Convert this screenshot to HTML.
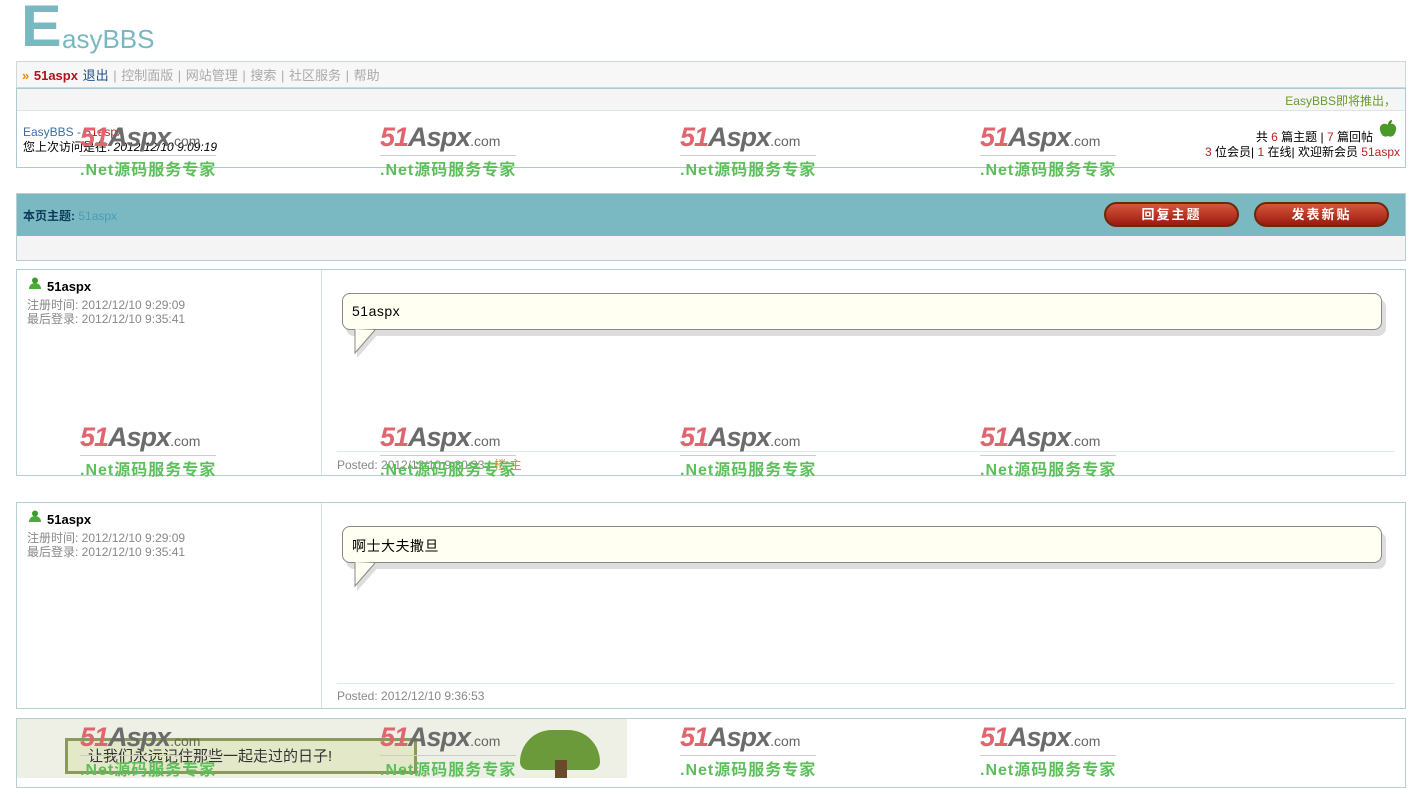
<!DOCTYPE html>
<html><head><meta charset="utf-8">
<style>
body{margin:0;width:1416px;height:778px;overflow:hidden;background:#fff;font-family:"Liberation Sans","Noto Sans CJK SC",sans-serif;font-size:12px;position:relative;}
.abs{position:absolute;}
.box{position:absolute;border:1px solid #b5d0d6;box-sizing:border-box;}
.wm{position:absolute;width:140px;height:55px;}
.wm .a{position:absolute;left:0;top:0;font:italic bold 27px "Liberation Sans",sans-serif;letter-spacing:-1px;color:#e0656f;}
.wm .a b{color:#6b6b6b;}
.wm .a small{font-size:14px;font-style:normal;font-weight:normal;color:#666;letter-spacing:0}
.wm .l{position:absolute;left:0;top:33px;width:136px;border-top:1px solid #ccc;}
.wm .n{position:absolute;left:0;top:34px;font:bold 16px "Liberation Sans","Noto Sans CJK SC",sans-serif;color:#5cbf5a;letter-spacing:1px;white-space:nowrap;}
.bub{position:absolute;left:342px;width:1040px;height:37px;background:#fffff2;border:1px solid #888;border-radius:8px;box-sizing:border-box;box-shadow:4px 6px 0 #ddd;font-size:14px;padding:9px 9px;font-family:"Liberation Sans","Noto Sans CJK SC",sans-serif;letter-spacing:.5px}
.tail{position:absolute;left:353px;}
.g{color:#888}
.red{color:#b22}
</style></head><body>
<div class="abs" style="left:21px;top:-2px;font:bold 58px 'Liberation Sans',sans-serif;color:#79b8c1;line-height:58px;transform:scaleX(1.05);transform-origin:left">E</div>
<div class="abs" style="left:62px;top:24px;font:26px 'Liberation Sans',sans-serif;color:#79b8c1;">asyBBS</div>

<div class="box" style="left:16px;top:61px;width:1390px;height:27px;background:#f7f7f7;border-color:#cfd8d8"></div>
<div class="abs" style="left:22px;top:65px;font-size:13px;color:#aaa;white-space:nowrap;word-spacing:1px"><span style="color:#e88a10;font-weight:bold">»</span> <b style="color:#b0131a">51aspx</b> <span style="color:#23508a">退出</span> | 控制面版 | 网站管理 | 搜索 | 社区服务 | 帮助</div>

<div class="box" style="left:16px;top:88px;width:1390px;height:80px;border-color:#a9cbd3"></div>
<div class="abs" style="left:17px;top:89px;width:1388px;height:21px;background:#f4f5f4;border-bottom:1px solid #dde5e5"></div>
<div class="abs" style="right:20px;top:92px;color:#6b9a2a;">EasyBBS即将推出，</div>
<div class="abs" style="left:23px;top:125px;color:#3a6ea5">EasyBBS - <span class="red">51aspx</span></div>
<div class="abs" style="left:23px;top:138px;color:#000">您上次访问是在: <i>2012/12/10 9:09:19</i></div>
<div class="abs" style="right:43px;top:128px;color:#000;">共 <span class="red">6</span> 篇主题 | <span class="red">7</span> 篇回帖</div>
<svg class="abs" style="left:1378px;top:119px" width="20" height="20" viewBox="0 0 20 20"><path d="M10 6C6 3 1 6 2 11c1 5 4 8 8 6 4 2 7-1 8-6 1-5-4-8-8-5z" fill="#4a9a2a"/><path d="M10 6c0-3 2-5 4-5 0 3-2 5-4 5z" fill="#3a8a1a"/></svg>
<div class="abs" style="right:16px;top:143px;color:#000;"><span class="red">3</span> 位会员| <span class="red">1</span> 在线| 欢迎新会员 <span class="red">51aspx</span></div>

<div class="box" style="left:16px;top:193px;width:1390px;height:68px;border-color:#b9cdd2"></div>
<div class="abs" style="left:17px;top:194px;width:1388px;height:42px;background:#7ab9c2"></div>
<div class="abs" style="left:17px;top:236px;width:1388px;height:24px;background:#f4f4f4"></div>
<div class="abs" style="left:23px;top:207px;color:#0d3a5a;font-weight:bold">本页主题: <span style="color:#4d9bb0;font-weight:normal">51aspx</span></div>
<div class="abs" style="left:1104px;top:202px;width:135px;height:25px;border-radius:13px;background:linear-gradient(#d8563c,#9a1a10);border:2px solid #6a2a08;box-sizing:border-box;text-align:center;color:#fff;font-weight:bold;font-size:13px;line-height:21px;letter-spacing:2px">回复主题</div>
<div class="abs" style="left:1254px;top:202px;width:135px;height:25px;border-radius:13px;background:linear-gradient(#d8563c,#9a1a10);border:2px solid #6a2a08;box-sizing:border-box;text-align:center;color:#fff;font-weight:bold;font-size:13px;line-height:21px;letter-spacing:2px">发表新贴</div>

<!-- post 1 -->
<div class="box" style="left:16px;top:269px;width:1390px;height:207px;border-color:#b5cfd5"></div>
<div class="abs" style="left:321px;top:270px;width:1px;height:205px;background:#d5e2e5"></div>
<div class="abs" style="left:337px;top:451px;width:1057px;height:1px;background:#dfe8e8"></div>
<svg class="abs" style="left:29px;top:277px" width="12" height="12"><circle cx="6" cy="3.5" r="3" fill="#3a9a2a"/><path d="M0 12c0-4 3-6 6-6s6 2 6 6z" fill="#4aaa3a"/></svg>
<div class="abs" style="left:47px;top:279px;font-weight:bold;font-size:13px">51aspx</div>
<div class="abs g" style="left:27px;top:298px;line-height:14px">注册时间: 2012/12/10 9:29:09<br>最后登录: 2012/12/10 9:35:41</div>
<div class="bub" style="top:293px">51aspx</div>
<svg class="tail" style="top:329px" width="30" height="36"><path d="M3 0 L3 26 L26 0Z" fill="#ddd" transform="translate(1,3)"/><path d="M2 0 L2 24 L22 1" fill="#fffff2" stroke="#888"/></svg>
<div class="abs g" style="left:337px;top:456px">Posted: 2012/12/10 9:30:33 | <span style="color:#d08a10">楼 主</span></div>

<!-- post 2 -->
<div class="box" style="left:16px;top:502px;width:1390px;height:207px;border-color:#b5cfd5"></div>
<div class="abs" style="left:321px;top:503px;width:1px;height:205px;background:#d5e2e5"></div>
<div class="abs" style="left:337px;top:683px;width:1057px;height:1px;background:#dfe8e8"></div>
<svg class="abs" style="left:29px;top:510px" width="12" height="12"><circle cx="6" cy="3.5" r="3" fill="#3a9a2a"/><path d="M0 12c0-4 3-6 6-6s6 2 6 6z" fill="#4aaa3a"/></svg>
<div class="abs" style="left:47px;top:512px;font-weight:bold;font-size:13px">51aspx</div>
<div class="abs g" style="left:27px;top:531px;line-height:14px">注册时间: 2012/12/10 9:29:09<br>最后登录: 2012/12/10 9:35:41</div>
<div class="bub" style="top:526px">啊士大夫撒旦</div>
<svg class="tail" style="top:562px" width="30" height="36"><path d="M3 0 L3 26 L26 0Z" fill="#ddd" transform="translate(1,3)"/><path d="M2 0 L2 24 L22 1" fill="#fffff2" stroke="#888"/></svg>
<div class="abs g" style="left:337px;top:689px">Posted: 2012/12/10 9:36:53</div>

<!-- banner -->
<div class="box" style="left:16px;top:718px;width:1390px;height:70px;border-color:#b5cfd5"></div>
<div class="abs" style="left:17px;top:719px;width:610px;height:59px;background:#eef0e6"></div>
<div class="abs" style="left:65px;top:738px;width:352px;height:36px;background:#e2e8c8;border:3px solid #8a9a5a;box-sizing:border-box;font-size:15px;color:#333;padding:4px 20px;white-space:nowrap">让我们永远记住那些一起走过的日子!</div>
<div class="abs" style="left:520px;top:730px;width:80px;height:40px;border-radius:40px 40px 10px 10px;background:#6a9a3a"></div>
<div class="abs" style="left:555px;top:760px;width:12px;height:18px;background:#6a4a2a"></div>

<!-- watermarks -->
<div class="wm" style="left:80px;top:122px"><div class="a">51<b>Aspx</b><small>.com</small></div><div class="l"></div><div class="n">.Net源码服务专家</div></div>
<div class="wm" style="left:380px;top:122px"><div class="a">51<b>Aspx</b><small>.com</small></div><div class="l"></div><div class="n">.Net源码服务专家</div></div>
<div class="wm" style="left:680px;top:122px"><div class="a">51<b>Aspx</b><small>.com</small></div><div class="l"></div><div class="n">.Net源码服务专家</div></div>
<div class="wm" style="left:980px;top:122px"><div class="a">51<b>Aspx</b><small>.com</small></div><div class="l"></div><div class="n">.Net源码服务专家</div></div>
<div class="wm" style="left:80px;top:422px"><div class="a">51<b>Aspx</b><small>.com</small></div><div class="l"></div><div class="n">.Net源码服务专家</div></div>
<div class="wm" style="left:380px;top:422px"><div class="a">51<b>Aspx</b><small>.com</small></div><div class="l"></div><div class="n">.Net源码服务专家</div></div>
<div class="wm" style="left:680px;top:422px"><div class="a">51<b>Aspx</b><small>.com</small></div><div class="l"></div><div class="n">.Net源码服务专家</div></div>
<div class="wm" style="left:980px;top:422px"><div class="a">51<b>Aspx</b><small>.com</small></div><div class="l"></div><div class="n">.Net源码服务专家</div></div>
<div class="wm" style="left:80px;top:722px"><div class="a">51<b>Aspx</b><small>.com</small></div><div class="l"></div><div class="n">.Net源码服务专家</div></div>
<div class="wm" style="left:380px;top:722px"><div class="a">51<b>Aspx</b><small>.com</small></div><div class="l"></div><div class="n">.Net源码服务专家</div></div>
<div class="wm" style="left:680px;top:722px"><div class="a">51<b>Aspx</b><small>.com</small></div><div class="l"></div><div class="n">.Net源码服务专家</div></div>
<div class="wm" style="left:980px;top:722px"><div class="a">51<b>Aspx</b><small>.com</small></div><div class="l"></div><div class="n">.Net源码服务专家</div></div>
</body></html>
